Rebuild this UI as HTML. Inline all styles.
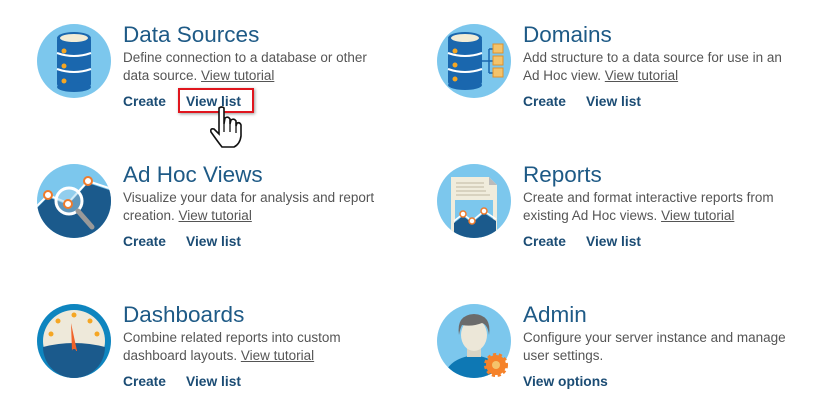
<!DOCTYPE html>
<html><head><style>
body{margin:0;width:824px;height:407px;background:#fff;font-family:"Liberation Sans",sans-serif;position:relative;overflow:hidden}
.ic{position:absolute;width:76px;height:76px}
.t{position:absolute;font-size:22.5px;color:#1e5a86;white-space:nowrap}
.d{position:absolute;font-size:13.5px;color:#555;line-height:18px;white-space:nowrap}
.d u{color:#555}
.l{position:absolute;font-size:13.8px;font-weight:bold;color:#1b4c74;white-space:nowrap}
</style></head><body>

<svg class="ic" style="left:36px;top:23px" viewBox="0 0 76 76">
<circle cx="38" cy="38" r="37" fill="#7cc7ed"/>
<rect x="21" y="14" width="34" height="50" rx="3" fill="#1a67ae"/>
<ellipse cx="38" cy="64" rx="17" ry="5" fill="#1a67ae"/>
<ellipse cx="38" cy="15" rx="17" ry="6" fill="#1a67ae"/>
<ellipse cx="38" cy="15" rx="14" ry="4" fill="#f2ecd6"/>
<path d="M21 30 Q38 36 55 30 M21 46 Q38 52 55 46" stroke="#fff" stroke-width="2" fill="none"/>
<circle cx="28" cy="28" r="2.5" fill="#f5a623"/><circle cx="28" cy="43" r="2.5" fill="#f5a623"/><circle cx="28" cy="58" r="2.5" fill="#f5a623"/>
</svg>
<div class="t" style="left:123px;top:22px">Data Sources</div>
<div class="d" style="left:123px;top:49px">Define connection to a database or other<br>data source. <u>View tutorial</u></div>
<div class="l" style="left:123px;top:94px">Create</div>
<div style="position:absolute;left:178px;top:88px;width:76px;height:25px;border:2px solid #e0161e;box-sizing:border-box;box-shadow:1px 1px 3px #999"></div>
<div class="l" style="left:186px;top:94px">View list</div>
<svg style="position:absolute;left:208px;top:106px" width="36" height="42" viewBox="0 0 36 42">
<path d="M11 2 Q14 0 16 2 L16 18 L17 12 Q20 10 22 13 L22 18 L23 14 Q26 12 28 15 L28 20 L29 17 Q32 16 33 19 L33 30 Q32 38 26 41 L14 41 Q10 36 3 26 Q2 22 6 23 L11 28 Z" fill="#fff" stroke="#111" stroke-width="1.6"/>
<path d="M16 18 L16 26 M22 18 L22 26 M28 20 L28 27" stroke="#111" stroke-width="1.3"/>
</svg>

<svg class="ic" style="left:436px;top:23px" viewBox="0 0 76 76">
<circle cx="38" cy="38" r="37" fill="#7cc7ed"/>
<rect x="12" y="14" width="34" height="48" rx="3" fill="#1a67ae"/>
<ellipse cx="29" cy="62" rx="17" ry="5" fill="#1a67ae"/>
<ellipse cx="29" cy="15" rx="17" ry="6" fill="#1a67ae"/>
<ellipse cx="29" cy="15" rx="14" ry="4" fill="#f2ecd6"/>
<path d="M12 30 Q29 36 46 30 M12 46 Q29 52 46 46" stroke="#fff" stroke-width="2" fill="none"/>
<circle cx="19" cy="28" r="2.5" fill="#f5a623"/><circle cx="19" cy="42" r="2.5" fill="#f5a623"/><circle cx="19" cy="56" r="2.5" fill="#f5a623"/>
<path d="M46 38 H53 M53 26 V50 M53 26 H57 M53 38 H57 M53 50 H57" stroke="#1a67ae" stroke-width="1.5" fill="none"/>
<rect x="57" y="21" width="10" height="9" fill="#f3c36b" stroke="#e0902a"/><rect x="57" y="33" width="10" height="9" fill="#f3c36b" stroke="#e0902a"/><rect x="57" y="45" width="10" height="9" fill="#f3c36b" stroke="#e0902a"/>
</svg>
<div class="t" style="left:523px;top:22px">Domains</div>
<div class="d" style="left:523px;top:49px">Add structure to a data source for use in an<br>Ad Hoc view. <u>View tutorial</u></div>
<div class="l" style="left:523px;top:94px">Create</div>
<div class="l" style="left:586px;top:94px">View list</div>

<svg class="ic" style="left:36px;top:163px" viewBox="0 0 76 76">
<clipPath id="c1"><circle cx="38" cy="38" r="37"/></clipPath>
<circle cx="38" cy="38" r="37" fill="#7cc7ed"/>
<path d="M0 46 L12 34 L32 42 L52 20 L76 28 V76 H0Z" fill="#1b5a8c" clip-path="url(#c1)"/>
<path d="M0 44 L12 32 L32 40 L52 18 L76 26" stroke="#fff" stroke-width="2" fill="none" clip-path="url(#c1)"/>
<circle cx="33" cy="38" r="13" fill="#a8d6ee" fill-opacity=".5" stroke="#fff" stroke-width="3"/>
<path d="M42 48 L56 64" stroke="#999" stroke-width="5" stroke-linecap="round"/>
<circle cx="12" cy="32" r="4" fill="#fff" stroke="#f07b2c" stroke-width="2"/>
<circle cx="32" cy="41" r="4" fill="#fff" stroke="#f07b2c" stroke-width="2"/>
<circle cx="52" cy="18" r="4" fill="#fff" stroke="#f07b2c" stroke-width="2"/>
</svg>
<div class="t" style="left:123px;top:162px">Ad Hoc Views</div>
<div class="d" style="left:123px;top:189px">Visualize your data for analysis and report<br>creation. <u>View tutorial</u></div>
<div class="l" style="left:123px;top:234px">Create</div>
<div class="l" style="left:186px;top:234px">View list</div>

<svg class="ic" style="left:436px;top:163px" viewBox="0 0 76 76">
<clipPath id="c2"><circle cx="38" cy="38" r="37"/></clipPath>
<circle cx="38" cy="38" r="37" fill="#7cc7ed"/>
<g clip-path="url(#c2)">
<path d="M15 14 H53 L61 22 V76 H15Z" fill="#f0ecdc"/>
<path d="M53 14 V22 H61Z" fill="#bbb"/>
<path d="M20 20 H48 M20 24 H48 M20 28 H50 M20 32 H54" stroke="#cfcab5" stroke-width="1.5"/>
<rect x="19" y="37" width="38" height="40" fill="#7cc7ed"/>
<path d="M18 60 L27 53 L36 60 L48 50 L60 58 V76 H18Z" fill="#1b5a8c"/>
<path d="M18 58 L27 51 L36 58 L48 48 L60 56" stroke="#fff" stroke-width="1.5" fill="none"/>
</g>
<circle cx="27" cy="51" r="3" fill="#fff" stroke="#f07b2c" stroke-width="1.5"/>
<circle cx="36" cy="58" r="3" fill="#fff" stroke="#f07b2c" stroke-width="1.5"/>
<circle cx="48" cy="48" r="3" fill="#fff" stroke="#f07b2c" stroke-width="1.5"/>
</svg>
<div class="t" style="left:523px;top:162px">Reports</div>
<div class="d" style="left:523px;top:189px">Create and format interactive reports from<br>existing Ad Hoc views. <u>View tutorial</u></div>
<div class="l" style="left:523px;top:234px">Create</div>
<div class="l" style="left:586px;top:234px">View list</div>

<svg class="ic" style="left:36px;top:303px" viewBox="0 0 76 76">
<circle cx="38" cy="38" r="37" fill="#0e85bf"/>
<circle cx="38" cy="38" r="31" fill="#eee9da"/>
<path d="M7 44 Q38 36 69 44 A31 31 0 0 1 7 44Z" fill="#1b5a8c"/>
<circle cx="38" cy="12" r="2.5" fill="#f5a623"/><circle cx="22" cy="18" r="2.5" fill="#f5a623"/><circle cx="54" cy="18" r="2.5" fill="#f5a623"/><circle cx="15" cy="31" r="2.5" fill="#f5a623"/><circle cx="61" cy="31" r="2.5" fill="#f5a623"/>
<path d="M35 20 L41 48 L36 48Z" fill="#f0632a"/>
<circle cx="38" cy="48" r="2" fill="#1b5a8c"/>
</svg>
<div class="t" style="left:123px;top:302px">Dashboards</div>
<div class="d" style="left:123px;top:329px">Combine related reports into custom<br>dashboard layouts. <u>View tutorial</u></div>
<div class="l" style="left:123px;top:374px">Create</div>
<div class="l" style="left:186px;top:374px">View list</div>

<svg class="ic" style="left:436px;top:303px" viewBox="0 0 76 76">
<clipPath id="c3"><circle cx="38" cy="38" r="37"/></clipPath>
<circle cx="38" cy="38" r="37" fill="#7cc7ed"/>
<g clip-path="url(#c3)">
<path d="M8 76 Q10 56 38 52 Q66 56 68 76Z" fill="#0e78b4"/>
<rect x="31" y="40" width="14" height="14" fill="#d9d4c4"/>
<ellipse cx="38" cy="32" rx="13" ry="16" fill="#ece7d8"/>
<path d="M23 32 Q20 12 38 11 Q56 12 53 32 Q52 22 46 20 Q36 24 26 22 Q24 26 23 32Z" fill="#6b6b6b"/>
</g>
<circle cx="60" cy="62" r="10" fill="#f5822a" stroke="#f5822a" stroke-width="4" stroke-dasharray="3 2.5"/>
<circle cx="60" cy="62" r="4" fill="#f5c36b"/>
</svg>
<div class="t" style="left:523px;top:302px">Admin</div>
<div class="d" style="left:523px;top:329px">Configure your server instance and manage<br>user settings.</div>
<div class="l" style="left:523px;top:374px">View options</div>
</body></html>
